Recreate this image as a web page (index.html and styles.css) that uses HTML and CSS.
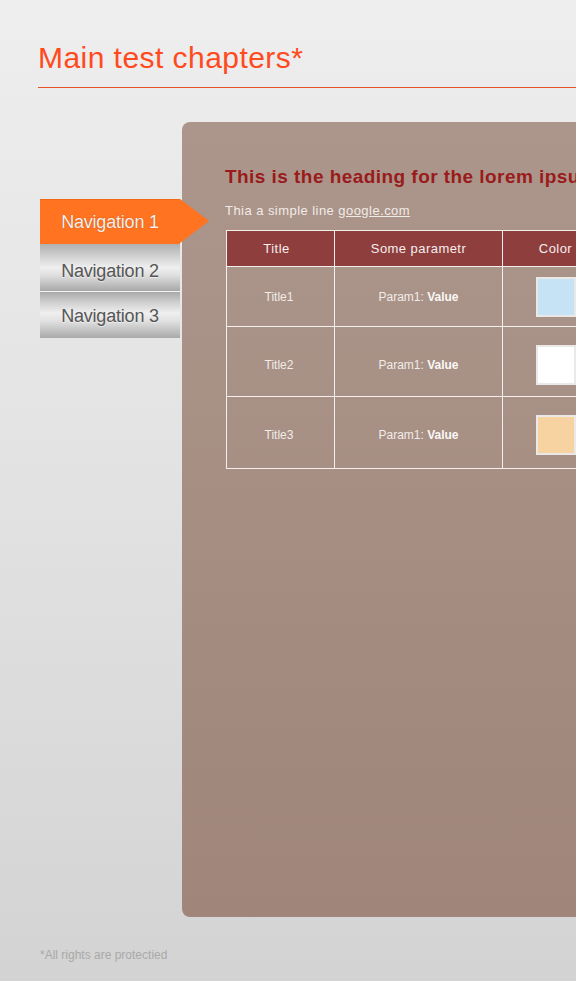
FILE: index.html
```html
<!DOCTYPE html>
<html lang="en">
<head>
<meta charset="utf-8">
<title>Main test chapters</title>
<link rel="stylesheet" href="styles.css">
</head>
<body>
<div class="page">
  <header class="top">
    <h1 class="title">Main test chapters*</h1>
  </header>
  <div class="main">
    <nav class="nav">
      <a class="nav-item active" href="#">Navigation 1</a>
      <a class="nav-item second" href="#">Navigation 2</a>
      <a class="nav-item third" href="#">Navigation 3</a>
    </nav>
    <section class="panel">
      <h2 class="heading">This is the heading for the lorem ipsum text</h2>
      <p class="lead">Thia a simple line <a href="#" class="link">google.com</a></p>
      <table class="grid">
        <colgroup>
          <col class="c1"><col class="c2"><col class="c3">
        </colgroup>
        <thead>
          <tr><th>Title</th><th>Some parametr</th><th>Color</th></tr>
        </thead>
        <tbody>
          <tr class="r1"><td>Title1</td><td>Param1: <b>Value</b></td><td><span class="swatch blue"></span></td></tr>
          <tr class="r2"><td>Title2</td><td>Param1: <b>Value</b></td><td><span class="swatch white"></span></td></tr>
          <tr class="r3"><td>Title3</td><td>Param1: <b>Value</b></td><td><span class="swatch peach"></span></td></tr>
        </tbody>
      </table>
    </section>
  </div>
  <footer class="foot">*All rights are protectied</footer>
</div>
</body>
</html>
```
FILE: styles.css
```css
html, body {
  margin: 0;
  padding: 0;
}
body {
  font-family: "Liberation Sans", Arial, sans-serif;
  background: linear-gradient(to bottom, #eeeeee 0%, #e2e2e2 50%, #d3d3d3 100%);
  min-height: 981px;
  overflow: hidden;
}
.page {
  width: 576px;
  height: 981px;
  overflow: hidden;
  padding-left: 38px;
  box-sizing: border-box;
}
.top {
  padding-top: 40px;
  border-bottom: 1px solid #e8522a;
  width: 700px;
}
.title {
  margin: 0;
  padding-bottom: 11px;
  font-weight: normal;
  font-size: 30px;
  line-height: 36px;
  letter-spacing: 0.45px;
  color: #ff4a1e;
}
.main {
  display: flex;
  margin-top: 34px;
}
.nav {
  flex: none;
  width: 140px;
  margin-left: 2px;
  margin-top: 77px;
  display: flex;
  flex-direction: column;
  position: relative;
  z-index: 2;
  align-self: flex-start;
}
.nav-item {
  display: block;
  box-sizing: border-box;
  text-align: center;
  white-space: nowrap;
  font-size: 18px;
  letter-spacing: -0.2px;
  text-decoration: none;
  color: #565656;
  text-shadow: 0 1px 0 rgba(255,255,255,0.5);
  background: linear-gradient(to bottom, #b0b0b0 0%, #c9c9c9 20%, #efefef 50%, #e0e0e0 66%, #a8a8a8 100%);
}
.nav-item.second {
  height: 47px;
  padding-top: 7px;
  line-height: 40px;
}
.nav-item.third {
  border-top: 1px solid #f2f2f2;
  height: 47px;
  padding-top: 2px;
  line-height: 44px;
  background: linear-gradient(to bottom, #a9a9a9 0%, #cbcbcb 20%, #efefef 45%, #e2e2e2 62%, #a9a9a9 100%);
}
.nav-item.active {
  position: relative;
  color: #f7f0ea;
  background: #ff7321;
  border-top: 1px solid #f06a18;
  height: 45px;
  line-height: 44px;
  text-shadow: 0 0 1px rgba(120, 50, 10, 0.6);
}
.nav-item.active::after {
  content: "";
  position: absolute;
  right: -29px;
  top: -1px;
  width: 0;
  height: 0;
  border-left: 29px solid #ff7321;
  border-top: 22.5px solid transparent;
  border-bottom: 22.5px solid transparent;
}
.panel {
  margin-left: 2px;
  width: 700px;
  height: 795px;
  flex: none;
  box-sizing: border-box;
  padding: 44px 0 0 43px;
  border-radius: 8px;
  background: linear-gradient(to bottom, #ac968b 0%, #a68e83 50%, #9f857a 100%);
}
.heading {
  margin: 0;
  font-size: 19px;
  line-height: 22px;
  font-weight: bold;
  letter-spacing: 0.45px;
  color: #9a1b1b;
  white-space: nowrap;
}
.lead {
  margin: 15px 0 11px;
  font-size: 13px;
  line-height: 16px;
  letter-spacing: 0.45px;
  color: #f1ebe7;
}
.link {
  color: #f1ebe7;
}
.grid {
  margin-left: 1px;
  border-collapse: collapse;
  table-layout: fixed;
  width: 382px;
}
.c1 { width: 108px; }
.c2 { width: 168px; }
.c3 { width: 106px; }
.grid th, .grid td {
  border: 1px solid #f3efed;
  text-align: center;
  padding: 0;
}
.grid th {
  height: 34px;
  padding-bottom: 1px;
  background: #8e3e3d;
  color: #f6eeee;
  font-weight: normal;
  font-size: 13px;
  letter-spacing: 0.45px;
}
.grid th:first-child {
  padding-right: 8px;
}
.grid td:first-child {
  padding-right: 3px;
}
.grid td {
  color: #f2ece8;
  font-size: 12px;
}
.grid td b {
  color: #fbf8f6;
}
.r1 td { height: 59px; }
.r2 td { height: 63px; padding-top: 6px; }
.r3 td { height: 67px; padding-top: 4px; }
.swatch {
  display: inline-block;
  vertical-align: middle;
  width: 36px;
  height: 36px;
  border: 2px solid #ebe9e8;
}
.swatch.blue { background: #c6e2f5; }
.swatch.white { background: #ffffff; }
.swatch.peach { background: #f6d3a1; }
.foot {
  margin-top: 31px;
  margin-left: 2px;
  font-size: 12px;
  line-height: 14px;
  color: #a9a9a9;
}
```
